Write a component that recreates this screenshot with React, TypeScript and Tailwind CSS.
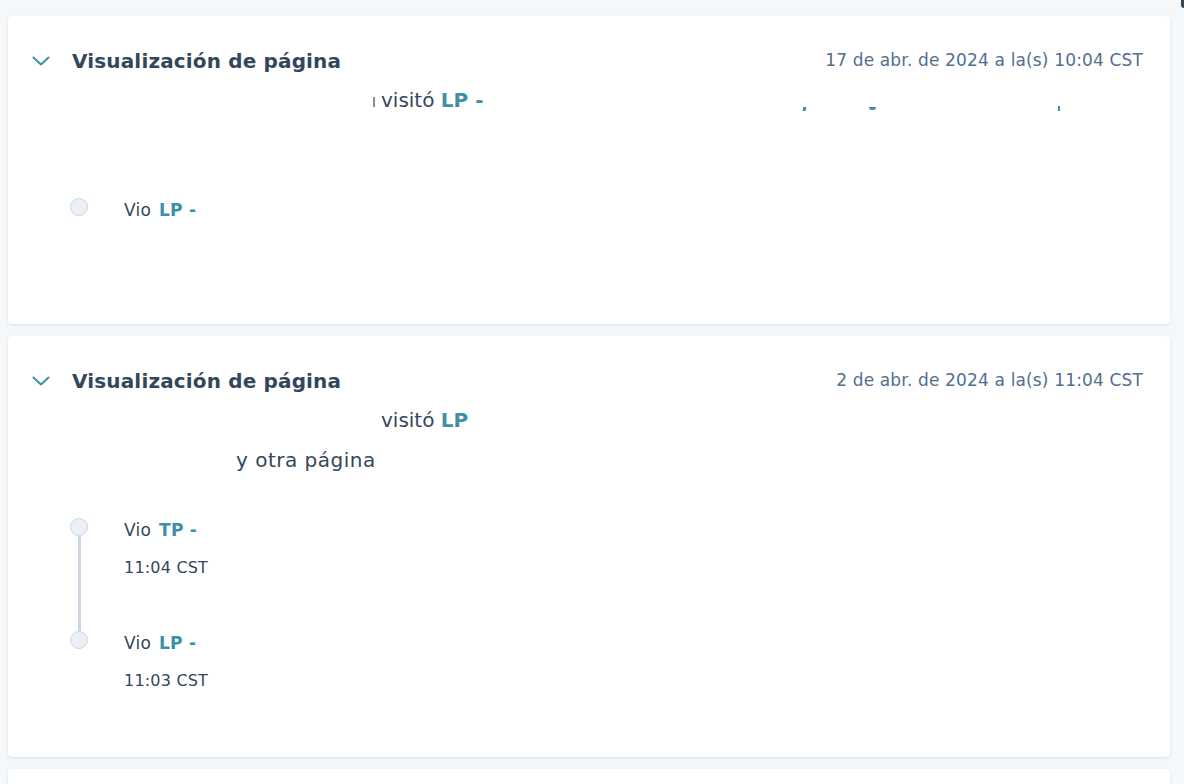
type Visit = { label: string; time: string };

function Chevron() {
  return (
    <svg width="18" height="10" viewBox="0 0 18 10" fill="none" className="shrink-0">
      <path d="M1.5 1.5 L9 8.5 L16.5 1.5" stroke="#3e8fa8" strokeWidth="2" strokeLinecap="round" strokeLinejoin="round" />
    </svg>
  );
}

function Dot() {
  return <div className="w-[18px] h-[18px] rounded-full bg-[#eaf0f6] border border-[#cbd6e2] shrink-0" />;
}

function Header({ date }: { date: string }) {
  return (
    <div className="flex items-center h-7">
      <div className="ml-[24px]">
        <Chevron />
      </div>
      <h2 className="ml-[22px] text-[20px] font-bold text-[#33475b] tracking-[0.15px]">Visualización de página</h2>
      <span className="ml-auto mr-[1px] text-[17px] tracking-[0.15px] text-[#516f90]">{date}</span>
    </div>
  );
}

function Timeline({ items }: { items: Visit[] }) {
  return (
    <div className="ml-[62px] flex flex-col">
      {items.map((it, i) => (
        <div key={i} className="flex">
          <div className="w-[18px] flex flex-col items-center">
            <Dot />
            {i < items.length - 1 && <div className="w-[3px] flex-1 bg-[#cbd6e2]" />}
          </div>
          <div className={"ml-[36px] text-[16px] text-[#33475b] " + (i < items.length - 1 ? "pb-[51px]" : "")}>
            <div className="leading-6 text-[17px] tracking-[0.3px]">
              Vio <span className="font-bold text-[#3e8fa8] ml-[2px]">{it.label} -</span>
            </div>
            <div className="leading-6 mt-[14px] h-6 tracking-[0.2px]">{it.time}</div>
          </div>
        </div>
      ))}
    </div>
  );
}

export default function App() {
  return (
    <div
      className="min-h-screen bg-[#f5f8fa] pt-4 pl-2 pr-[14px] relative"
      style={{ fontFamily: '"DejaVu Sans", sans-serif' }}
    >
      <div className="absolute right-0 top-0 w-[3px] h-[8px] bg-[#33475b] rounded-bl" />
      <div className="flex flex-col gap-3">
        <div className="bg-white rounded shadow-[0_1px_3px_rgba(45,62,80,0.12)] pt-[31px] pr-[26px] pb-[64px]">
          <Header date="17 de abr. de 2024 a la(s) 10:04 CST" />
          <div className="mt-[5px] text-[20px] leading-[40px] text-[#33475b] relative">
            <div className="pl-[365px]">
              <span className="inline-block w-[2px] h-[10px] bg-[#33475b] mr-[6px] align-middle opacity-60" />
              visitó <span className="font-bold text-[#3e8fa8]">LP -</span>
            </div>
            <div className="h-10" />
            <span className="absolute left-[795px] top-[27px] w-[3px] h-[4px] bg-[#3e8fa8] -skew-x-12" />
            <span className="absolute left-[861px] top-[27px] w-[7px] h-[3px] bg-[#3e8fa8] rounded-b" />
            <span className="absolute left-[1050px] top-[26px] w-[2px] h-[5px] bg-[#3e8fa8]" />
          </div>
          <div className="mt-[38px]">
            <Timeline items={[{ label: "LP", time: "" }]} />
          </div>
        </div>

        <div className="bg-white rounded shadow-[0_1px_3px_rgba(45,62,80,0.12)] pt-[31px] pr-[26px] pb-[64px]">
          <Header date="2 de abr. de 2024 a la(s) 11:04 CST" />
          <div className="mt-[5px] text-[20px] leading-[40px] text-[#33475b]">
            <div className="pl-[373px]">
              visitó <span className="font-bold text-[#3e8fa8]">LP</span>
            </div>
            <div className="pl-[228px] tracking-[0.5px]">y otra página</div>
          </div>
          <div className="mt-[38px]">
            <Timeline
              items={[
                { label: "TP", time: "11:04 CST" },
                { label: "LP", time: "11:03 CST" },
              ]}
            />
          </div>
        </div>

        <div className="bg-white rounded shadow-[0_1px_3px_rgba(45,62,80,0.12)] h-[200px]" />
      </div>
    </div>
  );
}
